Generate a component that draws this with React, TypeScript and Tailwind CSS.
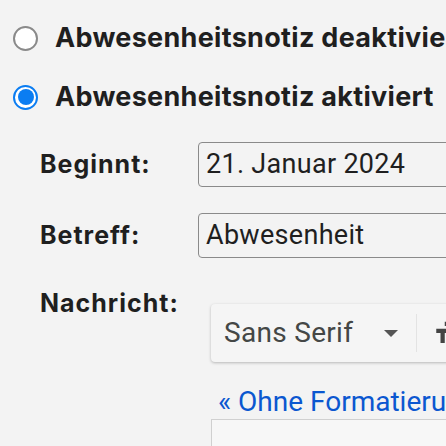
import React from "react";

const bold = { fontFamily: "Inter, 'Liberation Sans', sans-serif" };

export default function App() {
  return (
    <div className="w-[446px] h-[446px] overflow-hidden bg-[#f3f3f3] whitespace-nowrap" style={{ fontFamily: "Roboto, 'Liberation Sans', sans-serif" }}>
      <div className="pt-[25px] pl-[13px]">
        <div className="flex items-center h-[26px]">
          <span className="w-[25px] h-[25px] rounded-full border-[2px] border-[#8a8a8a] bg-white box-border shrink-0" />
          <span className="ml-[17px] text-[27px] font-bold text-[#1f1f1f] tracking-[0.3px]" style={bold}>Abwesenheitsnotiz deaktiviert</span>
        </div>
        <div className="flex items-center h-[26px] mt-[33px]">
          <span className="w-[25px] h-[25px] rounded-full border-[2px] border-[#0b7df2] bg-white box-border shrink-0 flex items-center justify-center">
            <span className="w-[16px] h-[16px] rounded-full bg-[#0b7df2]" />
          </span>
          <span className="ml-[17px] text-[27px] font-bold text-[#1f1f1f] tracking-[0.3px]" style={bold}>Abwesenheitsnotiz aktiviert</span>
        </div>
      </div>
      <div className="pl-[40px] mt-[32px]">
        <div className="flex items-start">
          <span className="w-[158px] shrink-0 pt-[4px] text-[25px] font-bold text-[#1f1f1f] tracking-[1px]" style={bold}>Beginnt:</span>
          <div className="w-[300px] h-[45px] rounded-[4px] border border-[#8a8a8a] pl-[7px] flex items-center text-[27px] tracking-[0.3px] text-[#1f1f1f] shrink-0">21. Januar 2024</div>
        </div>
        <div className="flex items-start mt-[26px]">
          <span className="w-[158px] shrink-0 pt-[4px] text-[25px] font-bold text-[#1f1f1f] tracking-[1px]" style={bold}>Betreff:</span>
          <div className="w-[300px] h-[45px] rounded-[4px] border border-[#8a8a8a] pl-[7px] flex items-center text-[27px] tracking-[0.3px] text-[#1f1f1f] shrink-0">Abwesenheit</div>
        </div>
        <div className="flex items-start mt-[27px]">
          <span className="w-[171px] shrink-0 text-[25px] font-bold text-[#1f1f1f] tracking-[1px]" style={bold}>Nachricht:</span>
          <div className="flex flex-col shrink-0 pt-[19px]">
            <div className="w-[300px] h-[58px] rounded-[4px] bg-[#f5f5f5] shadow-[0_1px_3px_rgba(0,0,0,0.25)] flex items-center">
              <span className="ml-[13px] text-[28px] tracking-[0.3px] text-[#444746]">Sans Serif</span>
              <svg className="ml-[31px] shrink-0" width="14" height="7" viewBox="0 0 14 7"><path d="M0 0h14L7 7z" fill="#555" /></svg>
              <span className="ml-[18px] w-[1px] h-[38px] bg-[#e3e3e3] shrink-0" />
              <svg className="ml-[15px] shrink-0" width="34" height="34" viewBox="0 0 24 24"><path d="M9 4v3h5v12h3V7h5V4H9zm-6 8h3v7h3v-7h3V9H3v3z" fill="#444" /></svg>
            </div>
            <span className="mt-[24px] ml-[7px] text-[28px] text-[#0b57d0] leading-[32px]">« Ohne Formatierung</span>
            <div className="mt-[1px] w-[300px] h-[60px] border border-[#d0d0d0] bg-[#f7f7f7]" />
          </div>
        </div>
      </div>
    </div>
  );
}
